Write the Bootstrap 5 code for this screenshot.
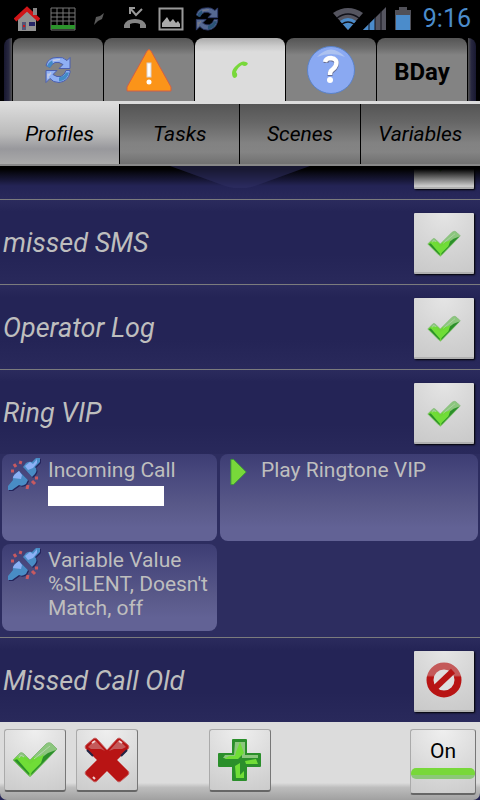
<!DOCTYPE html>
<html lang="en">
<head>
<meta charset="utf-8">
<meta name="viewport" content="width=device-width, initial-scale=1">
<title>Profiles</title>
<link href="https://cdn.jsdelivr.net/npm/bootstrap@5.3.0/dist/css/bootstrap.min.css" rel="stylesheet">
<style>
body{font-family:Roboto,"Liberation Sans",sans-serif;background:#242456;color:#bebebe;line-height:24px}
svg{display:block;flex:none}
button{font-family:inherit}
.status{height:38px;background:#000;padding:0 9px 0 14px}
.status-icons{gap:10px}
.status-sync{opacity:.6}
.clock{font-size:25px;color:#4b8ccb}
.projects{height:66px;background:#000;border-bottom:3px solid #dcdcdc;gap:1px}
.sliver{width:8px;background:linear-gradient(90deg,#181830,#282840 60%,#555);border-radius:8px 0 0 0;flex:none}
.sliver.end{background:linear-gradient(270deg,#181830,#282840 60%,#555);border-radius:0 8px 0 0}
.ptab{border:0;padding:0;color:#000;border-radius:8px 8px 0 0;background:linear-gradient(#555,#6c6c6c 10px,#838383 17px);font-size:24px;font-weight:700}
.ptab.active{background:linear-gradient(#aaa,#ccc 8px,#dcdcdc 14px)}
.sections{height:62px;background:#000;border-bottom:2px solid #888}
.stab{border:0;border-right:1px solid #000;padding:0;color:#000;font-size:21px;font-style:italic;background:linear-gradient(#555,#666 30%,#828282 65%,#848484 80%,#707070)}
.stab.active{background:linear-gradient(#dcdcdc,#bbb 50%,#98989c 75%,#aaa)}
.list{position:relative;background:#2d2d60}
.list-shade{position:absolute;left:0;top:0;width:100%;height:20px;pointer-events:none;background:linear-gradient(#000 15%,#0000)}
.list-notch{position:absolute;top:0;left:50%;margin-left:-80px}
.prow{height:84px;padding:2px 6px 0 3px;background:linear-gradient(#2b2b5d,#242456 12px,#242456 65%,#29295b)}
.prow.ruled{height:85px;border-bottom:1px solid #7b7b7d}
.prow.cut{height:34px;padding-bottom:10px;overflow:hidden}
.pname{font-size:27px;font-style:italic;line-height:32px}
.sq{width:60px;height:61px;padding:0;border:0;border-radius:1px;background:radial-gradient(circle at 50% 0,#e5e5e5,#d6d6d6 50%,#c9c9c9);border-bottom:2px solid #b0b0b0;box-shadow:1px 1px 2px #000;flex:none}
.tick{margin-top:3px}
.parts{display:grid;grid-template-columns:5fr 6fr;gap:3px;padding:0 2px 6px;border-bottom:1px solid #7b7b7d}
.part{min-height:87px;min-width:0;border-radius:8px;background:linear-gradient(#3d3d73,#49497e 25%,#595989 60%,#626295 85%);font-size:21px;padding:4px 0 0 6px;color:#bebebe}
.part-icon{width:40px;flex:none}
.part-icon.action{width:35px}
.blank{width:116px;height:20px;background:#fff;margin-top:4px}
.tools{height:78px;display:grid;grid-template-columns:1fr auto 1fr;padding:7px 4px 0;background:linear-gradient(#dcdcdc 78%,#bdbdbd 84%,#a0a0a0);border-radius:0 0 7px 7px}
.tool-pair{gap:10px}
.tool{width:62px;height:63px;padding:0;border:1px solid #aaa;border-bottom:2px solid #666;border-right-color:#777;border-radius:3px;background:radial-gradient(circle at 50% 0,#efefef,#ddd 50%,#cbcbcb);color:#000}
.toggle{width:66px;height:66px;font-size:21px;padding-bottom:5px}
.lamp{height:11px;width:100%;background:linear-gradient(#78d83a 60%,#8cc878 65%);border-radius:5px;margin-top:5px}
</style>
</head>
<body>
<svg width="0" height="0" class="position-absolute" aria-hidden="true">
<defs>
<linearGradient id="gl" x2="0" y2="1"><stop offset="0" stop-color="#8cc67e"/><stop offset=".38" stop-color="#8cc67e"/><stop offset=".45" stop-color="#6fda36"/><stop offset="1" stop-color="#6ccf38"/></linearGradient>
<linearGradient id="rd" x2="0" y2="1"><stop offset="0" stop-color="#c45a5a"/><stop offset=".33" stop-color="#c45a5a"/><stop offset=".4" stop-color="#b81414"/><stop offset="1" stop-color="#b81414"/></linearGradient>
<symbol id="check" viewBox="0 0 46 36"><path d="M1 18 8 11Q10 10 12 12L18 18 34 2Q38-1 41 3L45 7 20 33Q18 36 16 33Z" fill="url(#gl)" stroke="#83ba77"/><path d="M44 8 19 33 21 22 36 11Z" fill="#2b8f2b"/><path d="M2 18 6 17 18 30 17 33Z" fill="#2b8f2b"/><path d="M5 17 10 15 18 22 32 12 29 21 18 32Z" fill="#70dd37"/><path d="M7 16 9 13 12 15M22 17 38 4" stroke="#b5d5ac" fill="none"/></symbol>
<symbol id="sync" viewBox="0 0 26 27"><g stroke="#4b5fae" stroke-linejoin="round"><path d="M1 9Q3 1 12 1 18 0 22 4L25 1V12H14L18 8Q14 5 10 6 6 8 5 11Z" fill="#8fb0f4"/><path d="M25 16Q23 25 14 26 8 26 5 22L1 26V14H12L8 18Q12 21 16 20 20 18 21 14H25Z" fill="#8fb0f4"/></g><path d="M2 10Q3 6 7 4L8 7 5 11ZM14 21Q19 20 21 16H24Q22 24 14 25Z" fill="#438ac4"/><path d="M8 4 15 3M3 17V22M6 16 4 19" stroke="#c6cce4" stroke-width="1.5"/></symbol>
<symbol id="plug" viewBox="0 0 34 34"><g transform="translate(1 1)" fill="#24245a"><path d="M0 32V28L5 22Q4 19 7 16L11 13 20 22 18 26Q14 29 11 27L4 32ZM15 9 18 5Q21 3 24 4L28 0H32V4L27 9Q30 12 27 16L24 19Z"/></g><path d="M0 32V28L5 22Q4 19 7 16L11 13 20 22 18 26Q14 29 11 27L4 32ZM15 9 18 5Q21 3 24 4L28 0H32V4L27 9Q30 12 27 16L24 19Z" fill="#498cc5"/><path d="M5 20Q5 17 11 13L14 17 13 21ZM17 8 22 4 25 6 29 1 29 5 25 10 20 12Z" fill="#8cb0f5"/><path d="M13 3 12 6M6 6 8 9M3 13H6M30 20H27M27 26 24 23M19 31 20 27" stroke="#c85a60" stroke-width="3"/></symbol>
</defs></svg>

<header class="status d-flex align-items-center justify-content-between">
 <div class="status-icons d-flex align-items-center">
  <svg width="26" height="26" viewBox="0 0 26 26"><path d="M4 12 13 4 22 12V25H4Z" fill="#929292"/><path d="M1 14 13 3 25 14" stroke="#d01518" stroke-width="4" fill="none"/><path d="M19 2h4v7h-4Z" fill="#888"/><path d="M8 16h4v8H8Z" fill="#555575"/><path d="M15 16h6v4h-6Z" fill="#242465"/><path d="M9 19h2v2H9Z" fill="#d01518"/></svg>
  <svg width="26" height="24" viewBox="0 0 26 24"><path d="M1 1h24v22H1ZM7 1v17M13 1v17M19 1v17M1 6h24M1 10h24M1 14h24" fill="none" stroke="#777"/><path d="M1 18h24v4H1Z" fill="#2c942c"/></svg>
  <svg width="26" height="14" viewBox="0 0 26 14"><path d="M8 13 10 5 14 4 18 1 16 7 12 9Z" fill="#595959"/></svg>
  <svg width="26" height="24" viewBox="0 0 26 24"><path d="M2 21V18Q4 12 13 12T24 18V21H18V17Q13 15 8 17V21Z" fill="#858585"/><path d="M8 1 14 8 20 2M8 7V1H13" fill="none" stroke="#999" stroke-width="2"/></svg>
  <svg width="26" height="24" viewBox="0 0 26 24"><path d="M1.500 1.500h23v21h-23Z" fill="none" stroke="#999" stroke-width="2"/><path d="M4 20V16L9 10 12 15 15 12 18 16 20 14 22 17V20Z" fill="#aaa"/></svg>
  <svg class="status-sync" width="26" height="24"><use href="#sync"/></svg>
 </div>
 <div class="d-flex align-items-center">
  <svg width="30" height="24" viewBox="0 0 30 24"><path d="M0 6Q15-4 30 6L15 23Z" fill="#555560"/><path d="M7 14Q15 8 23 14L15 23Z" fill="#4b8ccb"/><path d="M4 11Q15 3 26 11M9 17Q15 13 21 17" fill="none" stroke="#101018" stroke-width="1.500"/></svg>
  <svg width="24" height="24" viewBox="0 0 24 24"><path d="M0 23 23 0V23Z" fill="#555560"/><path d="M0 23 12 11V23Z" fill="#4b8ccb"/><path d="M6 16V23M12 10V23M18 4V23" stroke="#101018"/></svg>
  <svg class="ms-2" width="16" height="24" viewBox="0 0 16 24"><path d="M0 3h4V0h8v3h4v20H0Z" fill="#505058"/><path d="M1 8h14v15H1Z" fill="#4b8ccb"/></svg>
  <span class="clock ms-2 ps-1">9:16</span>
 </div>
</header>

<nav class="projects d-flex px-1" aria-label="Projects">
 <div class="sliver"></div>
 <button class="ptab flex-fill w-100 d-flex align-items-center justify-content-center" aria-label="Sync"><svg width="26" height="28"><use href="#sync"/></svg></button>
 <button class="ptab flex-fill w-100 d-flex align-items-center justify-content-center" aria-label="Alerts"><svg width="46" height="44" viewBox="0 0 46 44"><path d="M21 3Q23 0 25 3L45 39V43H1V39Z" fill="#fb9419" stroke="#cf5f48"/><rect x="21" y="15" width="4" height="14" fill="#fff" stroke="#d8d0d0"/><circle cx="23" cy="34" r="2.500" fill="#fff"/></svg></button>
 <button class="ptab active flex-fill w-100 d-flex align-items-center justify-content-center" aria-label="Calls"><svg width="18" height="18" viewBox="0 0 18 18"><path d="M1 12Q1 8 6 4 11-1 15 1 18 2 16 4 14 6 11 4 7 6 5 11 8 15 4 17 1 17 1 12Z" fill="#78d83a"/></svg></button>
 <button class="ptab flex-fill w-100 d-flex align-items-center justify-content-center" aria-label="Help"><svg width="48" height="48" viewBox="0 0 48 48"><circle cx="24" cy="24" r="23.500" fill="#8aa9f2" stroke="#5b83c9"/><path d="M10 11Q24-4 38 11 24 5 10 11Z" fill="#adc2f0"/><path d="M19 17Q19 12 25 13 31 14 29 20 28 23 25 25 23 26 23 30" stroke="#666d92" stroke-width="5" fill="none"/><path d="M18 16Q19 12 24 12 31 13 29 19 28 22 25 24 23 25 23 29" stroke="#fff" stroke-width="4.500" fill="none"/><circle cx="23" cy="34" r="3" fill="#fff"/></svg></button>
 <button class="ptab flex-fill w-100 pt-1">BDay</button>
 <div class="sliver end"></div>
</nav>

<nav class="sections d-flex" aria-label="Sections">
 <button class="stab active w-100">Profiles</button>
 <button class="stab w-100">Tasks</button>
 <button class="stab w-100">Scenes</button>
 <button class="stab border-end-0 w-100">Variables</button>
</nav>

<main class="list">
 <div class="prow ruled cut d-flex align-items-end justify-content-end"><button class="sq d-flex align-items-center justify-content-center" aria-label="Enabled"><svg class="tick" width="34" height="28"><use href="#check"/></svg></button></div>
 <div class="list-shade"></div>
 <svg class="list-notch" width="160" height="22" viewBox="0 0 160 22" aria-hidden="true"><path d="M10 0H150L95 20Q80 25 65 20Z" fill="#303064" opacity=".5"/></svg>
 <div class="prow ruled d-flex align-items-center justify-content-between"><span class="pname">missed SMS</span><button class="sq d-flex align-items-center justify-content-center" aria-label="missed SMS enabled"><svg class="tick" width="34" height="28"><use href="#check"/></svg></button></div>
 <div class="prow ruled d-flex align-items-center justify-content-between"><span class="pname">Operator Log</span><button class="sq d-flex align-items-center justify-content-center" aria-label="Operator Log enabled"><svg class="tick" width="34" height="28"><use href="#check"/></svg></button></div>
 <div class="prow d-flex align-items-center justify-content-between"><span class="pname">Ring VIP</span><button class="sq d-flex align-items-center justify-content-center" aria-label="Ring VIP enabled"><svg class="tick" width="34" height="28"><use href="#check"/></svg></button></div>
 <div class="parts">
  <div class="part d-flex"><div class="part-icon"><svg width="34" height="34"><use href="#plug"/></svg></div><div>Incoming Call<div class="blank"></div></div></div>
  <div class="part d-flex"><div class="part-icon action"><svg class="ms-1" width="18" height="28" viewBox="0 0 20 28"><path d="M1 0H4L18 14 4 28H1Z" fill="#78d83a" stroke="#3a9b35"/></svg></div><div>Play Ringtone VIP</div></div>
  <div class="part d-flex"><div class="part-icon"><svg width="34" height="34"><use href="#plug"/></svg></div><div>Variable Value<br><span class="text-nowrap">%SILENT, Doesn't</span><br>Match, off</div></div>
 </div>
 <div class="prow d-flex align-items-center justify-content-between"><span class="pname">Missed Call Old</span><button class="sq d-flex align-items-center justify-content-center" aria-label="Missed Call Old disabled"><svg width="36" height="36" viewBox="0 0 36 36"><circle cx="18" cy="18" r="14" fill="#dedede" stroke="url(#rd)" stroke-width="7"/><path d="M8 27 27 9" stroke="#b81414" stroke-width="6"/></svg></button></div>
</main>

<footer class="tools">
 <div class="tool-pair d-flex">
  <button class="tool d-flex align-items-center justify-content-center" aria-label="Accept"><svg width="46" height="36"><use href="#check"/></svg></button>
  <button class="tool d-flex align-items-center justify-content-center" aria-label="Cancel"><svg width="46" height="46" viewBox="0 0 46 46"><path d="M2 12Q0 10 2 8L9 2Q11 0 13 2L23 13 33 2Q35 0 37 2L44 8Q46 10 44 12L33 23 44 34Q46 36 44 38L37 44Q35 46 33 44L23 34 13 44Q11 46 9 44L2 38Q0 36 2 34L13 23Z" fill="#b81414" stroke="#c86868"/><path d="M4 10 11 3 21 14 17 12 7 12ZM25 14 35 3 42 10 38 12 30 12Z" fill="#c45a5a"/><path d="M3 13 9 19M43 13 37 19" stroke="#242444" stroke-width="2"/><path d="M8 6 11 4M35 4 38 6M9 40l2 2" stroke="#f0d0d0" stroke-width="2"/></svg></button>
 </div>
 <div><button class="tool d-flex align-items-center justify-content-center" aria-label="Add"><svg width="44" height="44" viewBox="0 0 44 44"><path d="M15 2H28V16H42V28H28V42H15V28H1V16H15Z" fill="#2b8f2b" stroke="#2b8f2b" stroke-width="2" stroke-linejoin="round"/><path d="M17 4H27V17H40V20H24V12L16 20H5L7 17H16Z" fill="#8cc67e"/><path d="M18 14 22 4 26 15 20 21H6L11 18H17ZM27 23 38 21 40 26H28ZM17 28 22 25V37L26 33V40H18Z" fill="#70dd37"/></svg></button></div>
 <div class="d-flex justify-content-end"><button class="tool toggle">On<div class="lamp"></div></button></div>
</footer>
<script src="https://cdn.jsdelivr.net/npm/bootstrap@5.3.0/dist/js/bootstrap.bundle.min.js"></script>
</body>
</html>
